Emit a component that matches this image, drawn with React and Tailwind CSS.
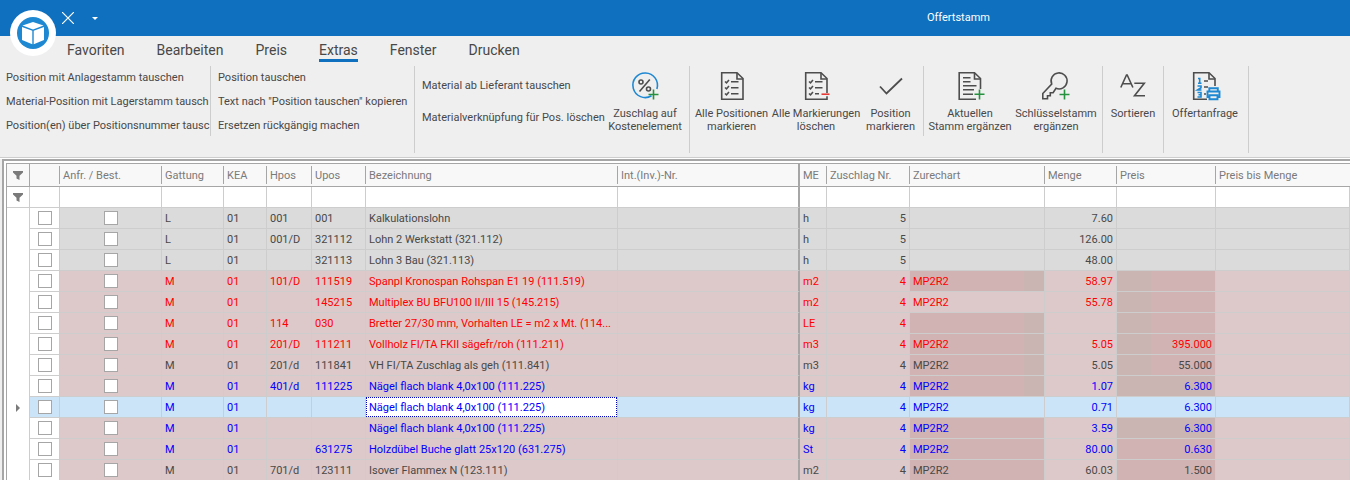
import { useState } from "react";
import clsx from "clsx";

const TABS = ["Favoriten", "Bearbeiten", "Preis", "Extras", "Fenster", "Drucken"];

const COLUMNS = [
  { key: "best", label: "Anfr. / Best.", width: "w-[102px]", check: true },
  { key: "gattung", label: "Gattung", width: "w-[62px]" },
  { key: "kea", label: "KEA", width: "w-[43px]" },
  { key: "hpos", label: "Hpos", width: "w-[45px]" },
  { key: "upos", label: "Upos", width: "w-[54px]" },
  { key: "text", label: "Bezeichnung", width: "w-[252px]" },
  { key: "inv", label: "Int.(Inv.)-Nr.", width: "w-[182px]", fixed: true },
  { key: "me", label: "ME", width: "w-[27px]" },
  { key: "zuschlag", label: "Zuschlag Nr.", width: "w-[83px]", right: true },
  { key: "zurechart", label: "Zurechart", width: "w-[135px]" },
  { key: "menge", label: "Menge", width: "w-[72px]", right: true },
  { key: "preis", label: "Preis", width: "w-[99px]", right: true },
  { key: "bisMenge", label: "Preis bis Menge", width: "" },
];

const ROSE = "bg-[#d2b3b3]";
const TAUPE = "bg-[#cbb5b3]";
const ROSE_TAUPE = "bg-linear-to-r from-[#d2b3b3] from-85% to-[#cbb5b3] to-85%";
const TAUPE_ROSE = "bg-linear-to-r from-[#cbb5b3] from-35% to-[#d2b3b3] to-35%";

const ROWS = [
  { tone: "grey", gattung: "L", kea: "01", hpos: "001", upos: "001", text: "Kalkulationslohn", me: "h", zuschlag: "5", menge: "7.60" },
  { tone: "grey", gattung: "L", kea: "01", hpos: "001/D", upos: "321112", text: "Lohn 2 Werkstatt (321.112)", me: "h", zuschlag: "5", menge: "126.00" },
  { tone: "grey", gattung: "L", kea: "01", upos: "321113", text: "Lohn 3 Bau (321.113)", me: "h", zuschlag: "5", menge: "48.00" },
  { ink: "red", gattung: "M", kea: "01", hpos: "101/D", upos: "111519", text: "Spanpl Kronospan Rohspan E1 19 (111.519)", me: "m2", zuschlag: "4", zurechart: "MP2R2", menge: "58.97", fill: { zurechart: ROSE_TAUPE, preis: TAUPE_ROSE } },
  { ink: "red", gattung: "M", kea: "01", upos: "145215", text: "Multiplex BU BFU100 II/III 15 (145.215)", me: "m2", zuschlag: "4", zurechart: "MP2R2", menge: "55.78", fill: { preis: TAUPE_ROSE } },
  { ink: "red", gattung: "M", kea: "01", hpos: "114", upos: "030", text: "Bretter 27/30 mm, Vorhalten LE = m2 x Mt. (114...", me: "LE", zuschlag: "4", fill: { zurechart: ROSE_TAUPE, preis: TAUPE_ROSE } },
  { ink: "red", gattung: "M", kea: "01", hpos: "201/D", upos: "111211", text: "Vollholz FI/TA FKII sägefr/roh (111.211)", me: "m3", zuschlag: "4", zurechart: "MP2R2", menge: "5.05", preis: "395.000", fill: { zurechart: ROSE_TAUPE, preis: TAUPE_ROSE } },
  { gattung: "M", kea: "01", hpos: "201/d", upos: "111841", text: "VH FI/TA Zuschlag als geh (111.841)", me: "m3", zuschlag: "4", zurechart: "MP2R2", menge: "5.05", preis: "55.000", fill: { zurechart: ROSE_TAUPE, preis: TAUPE_ROSE } },
  { ink: "blue", gattung: "M", kea: "01", hpos: "401/d", upos: "111225", text: "Nägel flach blank 4,0x100 (111.225)", me: "kg", zuschlag: "4", zurechart: "MP2R2", menge: "1.07", preis: "6.300", fill: { zurechart: ROSE_TAUPE, preis: TAUPE } },
  { ink: "blue", tone: "active", gattung: "M", kea: "01", text: "Nägel flach blank 4,0x100 (111.225)", me: "kg", zuschlag: "4", zurechart: "MP2R2", menge: "0.71", preis: "6.300" },
  { ink: "blue", gattung: "M", kea: "01", text: "Nägel flach blank 4,0x100 (111.225)", me: "kg", zuschlag: "4", zurechart: "MP2R2", menge: "3.59", preis: "6.300", fill: { zurechart: ROSE, preis: TAUPE } },
  { ink: "blue", gattung: "M", kea: "01", upos: "631275", text: "Holzdübel Buche glatt 25x120 (631.275)", me: "St", zuschlag: "4", zurechart: "MP2R2", menge: "80.00", preis: "0.630", fill: { zurechart: ROSE, preis: ROSE } },
  { gattung: "M", kea: "01", hpos: "701/d", upos: "123111", text: "Isover Flammex N (123.111)", me: "m2", zuschlag: "4", zurechart: "MP2R2", menge: "60.03", preis: "1.500", fill: { zurechart: ROSE, preis: ROSE } },
];

function rowTone(tone) {
  if (tone === "grey") return "bg-[#dbdbdb]";
  if (tone === "active") return "bg-[#cce4f7]";
  return "bg-[#ddc9c9]";
}

function rowInk(ink) {
  if (ink === "red") return "text-[#ff0000]";
  if (ink === "blue") return "text-[#0000ff]";
  return "text-[#484848]";
}

function LogoIcon() {
  return (
    <svg viewBox="0 0 46 46" className="size-[46px]" aria-hidden="true">
      <circle cx="23" cy="23" r="23" fill="#fff" />
      <circle cx="23" cy="23" r="16" fill="#1e88d2" />
      <path d="M23 12l10.500 3.600L23 19.500l-10.500-3.900z" fill="#fff" />
      <path d="M12 17l10.300 3.700v13.600L12 30z" fill="#fff" />
      <path d="M34 17l-10.300 3.700v13.600L34 30z" fill="#fff" />
    </svg>
  );
}

function Icon({ children }) {
  return (
    <svg viewBox="0 0 32 32" className="size-8 shrink-0" fill="none" stroke="#4d4d4d" strokeWidth="1.6" aria-hidden="true">
      {children}
    </svg>
  );
}

function PercentIcon() {
  return (
    <Icon>
      <path d="M22.500 25.800A12.300 12.300 0 1 1 27.900 19" stroke="#1e88d2" />
      <path d="M20.800 9.500L10.500 21.500" />
      <circle cx="12" cy="12" r="2" />
      <circle cx="19.500" cy="19" r="2" />
      <path d="M24.500 19.500v10M19.500 24.500h10" stroke="#26923f" />
    </Icon>
  );
}

function ChecklistIcon({ removed }) {
  return (
    <Icon>
      <path d={removed ? "M27 23V8.500L21 2.700H5.700v26.600H27v-3" : "M27 29.300H5.700V2.700H21l6 5.800z"} />
      <path d="M21 3v6h6" />
      <path d="M9 11.500l1.500 1.300 2.500-2.800M9 17.500l1.500 1.300 2.500-2.800M9 23.500l1.500 1.300 2.500-2.800" />
      <path d={removed ? "M15 11.700h7.500M15 17.700h7.500M15 23.700h4" : "M15 11.700h7.500M15 17.700h7.500M15 23.700h7.500"} />
      {removed && <path d="M21.500 24.200h8" stroke="#e53935" />}
    </Icon>
  );
}

function CheckIcon() {
  return (
    <Icon>
      <path d="M5 16.500l6.500 7L27 8.500" strokeWidth="1.800" />
    </Icon>
  );
}

function DocumentAddIcon() {
  return (
    <Icon>
      <path d="M26.500 19V8.500L20.500 2.700H5.200v26.600H22" />
      <path d="M20.500 3v6h6" />
      <path d="M9 7.700h7.500M9 11.700h7.500M9 15.700h13.500M9 19.700h11M9 24.200h10" />
      <path d="M25.500 19.500v10M20.500 24.200h10" stroke="#26923f" />
    </Icon>
  );
}

function KeyAddIcon() {
  return (
    <Icon>
      <path d="M16 18.300a8 8 0 1 0-4.300-4.300L2.800 23.500v5.300h4.700v-3h2.800v-3h2.800z" />
      <path d="M24.500 19.500v10M19.500 24.500h10" stroke="#26923f" />
    </Icon>
  );
}

function SortIcon() {
  return (
    <Icon>
      <path d="M3.800 17.500L9.500 5h.7l5.700 12.500M6 13.800h7.700" />
      <path d="M17.300 13.300h10L17.500 25.800h10.500" />
    </Icon>
  );
}

function InquiryIcon() {
  return (
    <Icon>
      <path d="M26 16V8.500L20 2.700H4.700v26.600H18" />
      <path d="M20 3v6h6" />
      <path d="M15 11h4M15 17h4M15 24h2" />
      <path
        d="M9 8.500h1.700V13.200M9 13.200h3.500M8.500 16h3.500v1.700l-3.500 2.300h4M8.500 22.500h3.500v4.500H8.500M9.500 24.700h2.500"
        stroke="#1e88d2"
      />
      <path d="M20.300 21.500v-3.200h8.500v3.200M20.500 27H18.500v-5.500h12V27h-2M20.500 25.200h8v4h-8z" stroke="#1e88d2" strokeWidth="1.900" />
    </Icon>
  );
}

function TextButton({ children, tall }) {
  return (
    <button type="button" className={clsx("block whitespace-nowrap text-left", tall ? "h-8" : "h-6")}>
      {children}
    </button>
  );
}

function BigButton({ icon, lines, width }) {
  return (
    <button type="button" className={clsx("flex shrink-0 flex-col items-center gap-[5px]", width)}>
      {icon}
      <span className="whitespace-nowrap leading-[13px]">
        {lines.map((line) => (
          <span key={line} className="block">
            {line}
          </span>
        ))}
      </span>
    </button>
  );
}

function Divider({ short }) {
  return <div className={clsx("w-px shrink-0 bg-[#cdcdcd]", short ? "h-[70px]" : "h-[87px]")} />;
}

function Ribbon() {
  return (
    <div className="flex items-start border-b border-[#cdcdcd] pb-1 pt-[2px]">
      <div className="flex w-[210px] shrink-0 flex-col pl-[6px]">
        <TextButton>Position mit Anlagestamm tauschen</TextButton>
        <TextButton>Material-Position mit Lagerstamm tausch</TextButton>
        <TextButton>Position(en) über Positionsnummer tausc</TextButton>
      </div>
      <Divider short />
      <div className="w-[203px] shrink-0 pl-[7px]">
        <TextButton>Position tauschen</TextButton>
        <TextButton>Text nach "Position tauschen" kopieren</TextButton>
        <TextButton>Ersetzen rückgängig machen</TextButton>
      </div>
      <Divider />
      <div className="flex w-[274px] shrink-0 pl-[7px]">
        <div className="w-[182px] pt-1">
          <TextButton tall>Material ab Lieferant tauschen</TextButton>
          <TextButton tall>Materialverknüpfung für Pos. löschen</TextButton>
        </div>
        <div className="pt-1">
          <BigButton icon={<PercentIcon />} lines={["Zuschlag auf", "Kostenelement"]} width="w-[82px]" />
        </div>
      </div>
      <Divider />
      <div className="flex pl-[3px] pr-1 pt-1">
        <BigButton icon={<ChecklistIcon />} lines={["Alle Positionen", "markieren"]} width="w-[77px]" />
        <BigButton icon={<ChecklistIcon removed />} lines={["Alle Markierungen", "löschen"]} width="w-[92px]" />
        <BigButton icon={<CheckIcon />} lines={["Position", "markieren"]} width="w-[57px]" />
      </div>
      <Divider short />
      <div className="flex pl-[3px] pr-[3px] pt-1">
        <BigButton icon={<DocumentAddIcon />} lines={["Aktuellen", "Stamm ergänzen"]} width="w-[86px]" />
        <BigButton icon={<KeyAddIcon />} lines={["Schlüsselstamm", "ergänzen"]} width="w-[86px]" />
      </div>
      <Divider />
      <div className="px-[2px] pt-1">
        <BigButton icon={<SortIcon />} lines={["Sortieren"]} width="w-[56px]" />
      </div>
      <Divider />
      <div className="pl-[2px] pr-1 pt-1">
        <BigButton icon={<InquiryIcon />} lines={["Offertanfrage"]} width="w-[78px]" />
      </div>
      <Divider />
    </div>
  );
}

function FilterIcon() {
  return (
    <svg viewBox="0 0 10 9" className="mx-auto h-[9px] w-[10px]" aria-hidden="true">
      <path d="M0 0h10v1.500L6.500 4.700V9l-3-1.500V4.700L0 1.500z" fill="#7a7a7a" />
    </svg>
  );
}

function CheckBox({ label }) {
  return (
    <input
      type="checkbox"
      aria-label={label}
      className="mx-auto block size-[14px] appearance-none border border-[#a6a6a6] bg-white checked:bg-[#1070c0]"
    />
  );
}

function PositionTable() {
  return (
    <table className="w-full table-fixed border-separate border-spacing-0 bg-white">
      <thead>
        <tr className="h-[23px] bg-[#f8f8f8] text-left text-[#7a7a7a]">
          <th className="w-[23px] border-b border-r border-[#a6a6a6] p-0">
            <FilterIcon />
          </th>
          <th className="w-[30px] border-b border-[#a6a6a6] p-0">
            <div className="h-[18px] border-r border-[#a6a6a6]" />
          </th>
          {COLUMNS.map((col) => (
            <th
              key={col.key}
              className={clsx(
                "overflow-hidden border-b border-[#a6a6a6] p-0 font-normal",
                col.width,
                col.fixed && "border-r-2"
              )}
            >
              <div
                className={clsx(
                  "h-[18px] whitespace-nowrap pl-[3px] leading-5",
                  !col.fixed && col.key !== "bisMenge" && "border-r border-[#a6a6a6]"
                )}
              >
                {col.label}
              </div>
            </th>
          ))}
        </tr>
      </thead>
      <tbody>
        <tr className="h-[21px]">
          <td className="border-b border-r border-[#cdcdcd] p-0">
            <FilterIcon />
          </td>
          <td className="border-b border-r border-[#cdcdcd] p-0" />
          {COLUMNS.map((col) => (
            <td
              key={col.key}
              className={clsx("border-b border-b-[#cdcdcd] p-0", col.fixed ? "border-r-2 border-r-[#a6a6a6]" : "border-r border-r-[#cdcdcd]")}
            />
          ))}
        </tr>
        {ROWS.map((row, index) => {
          const active = row.tone === "active";
          return (
            <tr key={index} className={clsx("h-[21px]", rowInk(row.ink))}>
              <td className="border-r border-[#cdcdcd] p-0">
                {active && (
                  <svg viewBox="0 0 4 8" className="mx-auto h-2 w-1" aria-hidden="true">
                    <path d="M0 0l4 4-4 4z" fill="#7a7a7a" />
                  </svg>
                )}
              </td>
              <td className={clsx("border-b border-r border-[#cdcdcd] p-0", active && "bg-[#cce4f7]")}>
                <CheckBox label={`Zeile ${index + 1} auswählen`} />
              </td>
              {COLUMNS.map((col) => {
                const focused = active && col.key === "text";
                return (
                  <td
                    key={col.key}
                    className={clsx(
                      "overflow-hidden whitespace-nowrap border-b border-b-[#cdcdcd] p-0",
                      col.fixed ? "border-r-2 border-r-[#a6a6a6]" : "border-r border-r-[#cdcdcd]",
                      row.fill?.[col.key] ?? (focused ? "bg-white" : rowTone(row.tone))
                    )}
                  >
                    {col.check ? (
                      <CheckBox label={`Zeile ${index + 1} bestellen`} />
                    ) : (
                      <div
                        className={clsx(
                          "h-5 px-[3px] leading-[22px]",
                          col.right && "text-right",
                          focused && "outline-1 -outline-offset-1 outline-dotted outline-[#0000c0]"
                        )}
                      >
                        {row[col.key]}
                      </div>
                    )}
                  </td>
                );
              })}
            </tr>
          );
        })}
      </tbody>
    </table>
  );
}

export default function App() {
  const [tab, setTab] = useState("Extras");

  return (
    <div className="h-screen overflow-hidden bg-[#efefef] font-[Roboto,sans-serif] text-[11px] text-[#484848]">
      <header className="relative flex h-9 items-center justify-between bg-[#1070c0] pl-[62px] pr-[360px] text-white">
        <div className="absolute left-[10px] top-[10px]">
          <LogoIcon />
        </div>
        <div className="flex items-center gap-4">
          <button type="button" aria-label="Schliessen">
            <svg viewBox="0 0 12 12" className="size-3" stroke="#fff" strokeWidth="1.200">
              <path d="M0 0l12 12M12 0L0 12" />
            </svg>
          </button>
          <button type="button" aria-label="Mehr">
            <svg viewBox="0 0 6 3" className="ml-[2px] h-[3px] w-[6px]">
              <path d="M0 0h6L3 3z" fill="#fff" />
            </svg>
          </button>
        </div>
        <h1>Offertstamm</h1>
      </header>

      <nav className="flex h-7 items-start gap-8 pl-[67px] text-[14px]">
        {TABS.map((name) => (
          <button
            key={name}
            type="button"
            onClick={() => setTab(name)}
            className={clsx("h-[26px] border-b-[3px] pt-1 leading-5", tab === name ? "border-[#1070c0]" : "border-transparent")}
          >
            {name}
          </button>
        ))}
      </nav>

      <Ribbon />

      <main className="border-t border-white pl-[2px]">
        <div className="border-l-2 border-t-2 border-[#a6a6a6] bg-white pl-[2px] pt-[2px]">
          <div className="border-l border-t border-[#a6a6a6]">
            <PositionTable />
          </div>
        </div>
      </main>
    </div>
  );
}
